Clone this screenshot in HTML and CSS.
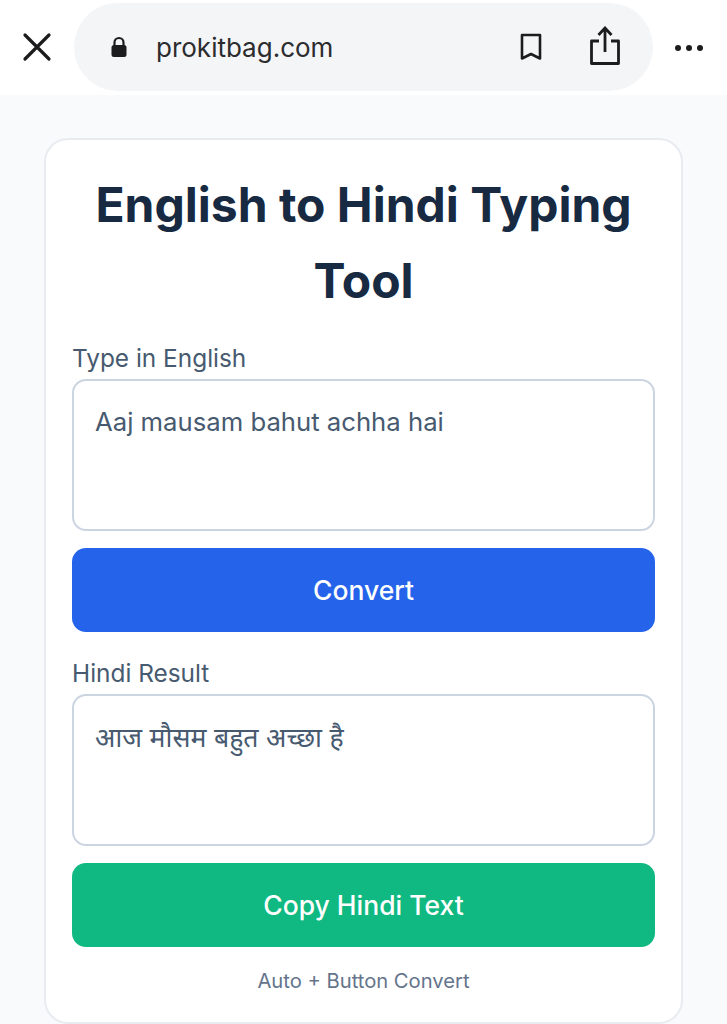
FILE: index.html
```html
<!DOCTYPE html>
<html lang="en">
<head>
  <meta charset="UTF-8" />
  <title>English to Hindi Typing Tool</title>
  <meta name="viewport" content="width=device-width, initial-scale=1.0" />
  <link rel="stylesheet" href="styles.css">
</head>
<body>
  <header class="browser-bar">
    <svg class="close-icon" width="30" height="30" viewBox="0 0 30 30" aria-hidden="true">
      <path d="M3 3 L27 27 M27 3 L3 27" fill="none" stroke="#1c1c1e" stroke-width="3.2" stroke-linecap="round" />
    </svg>
    <div class="address-pill">
      <svg class="lock-icon" width="18" height="22" viewBox="0 0 18 22" aria-hidden="true">
        <path d="M4.5 10 V6.5 a4.5 4.5 0 0 1 9 0 V10" fill="none" stroke="#1c1c1e" stroke-width="2.2" />
        <rect x="1.5" y="9" width="15" height="12" rx="2.5" fill="#1c1c1e" />
      </svg>
      <span class="url">prokitbag.com</span>
      <svg class="bookmark-icon" width="22" height="28" viewBox="0 0 22 28" aria-hidden="true">
        <path d="M2 2 H20 V25.5 L11 21 L2 25.5 Z" fill="none" stroke="#1c1c1e" stroke-width="2.6" stroke-linejoin="round" />
      </svg>
      <svg class="share-icon" width="32" height="40" viewBox="0 0 32 40" aria-hidden="true">
        <path d="M10 15 H2.5 V37.5 H29.5 V15 H22" fill="none" stroke="#1c1c1e" stroke-width="2.8" stroke-linejoin="round" />
        <path d="M16 26 V3 M9.5 9 L16 2 L22.5 9" fill="none" stroke="#1c1c1e" stroke-width="2.8" />
      </svg>
    </div>
    <div class="more-dots"><span></span><span></span><span></span></div>
  </header>

  <main class="page">
    <div class="card">
      <h1>English to Hindi Typing Tool</h1>

      <label for="englishText">Type in English</label>
      <textarea id="englishText">Aaj mausam bahut achha hai</textarea>
      <button class="btn-convert">Convert</button>

      <label for="hindiText">Hindi Result</label>
      <textarea id="hindiText" lang="hi">आज मौसम बहुत अच्छा है</textarea>
      <button class="btn-copy">Copy Hindi Text</button>

      <p class="note">Auto + Button Convert</p>
    </div>
  </main>
</body>
</html>
```

FILE: styles.css
```css
* {
  box-sizing: border-box;
}

body {
  margin: 0;
  height: 1024px;
  overflow: hidden;
  font-family: Inter, "Noto Sans", sans-serif;
  background: #f9fafc;
  color: #1e293b;
}

.browser-bar {
  height: 95px;
  background: #fff;
  display: flex;
  align-items: flex-start;
  padding: 3px 0 0 22px;
}

.close-icon {
  margin-top: 29px;
  flex-shrink: 0;
}

.address-pill {
  width: 579px;
  height: 88px;
  margin-left: 22px;
  background: #f4f5f7;
  border-radius: 44px;
  display: flex;
  align-items: center;
  padding-left: 36px;
}

.lock-icon {
  flex-shrink: 0;
}

.url {
  margin-left: 28px;
  font-size: 26px;
  color: #2c2c2e;
  width: 353px;
}

.bookmark-icon {
  margin-left: 11px;
}

.share-icon {
  margin-left: 47px;
  margin-top: -2px;
}

.more-dots {
  display: flex;
  gap: 5px;
  margin: 42px 0 0 22px;
}

.more-dots span {
  width: 6px;
  height: 6px;
  border-radius: 50%;
  background: #1c1c1e;
}

.page {
  padding: 43px 44px 0;
}

.card {
  height: 886px;
  background: #fff;
  border: 2px solid #e8ebf0;
  border-radius: 24px;
  padding: 27px 26px 0;
}

h1 {
  margin: 0 0 21px;
  font-size: 48px;
  line-height: 76px;
  font-weight: 700;
  text-align: center;
  color: #172a41;
}

label {
  display: block;
  font-size: 24.4px;
  line-height: 36px;
  color: #475a70;
  margin-bottom: 3px;
}

textarea {
  display: block;
  width: 100%;
  height: 152px;
  padding: 22px 21px;
  border: 2px solid #cbd5e1;
  border-radius: 14px;
  font-family: Inter, "Noto Sans", sans-serif;
  font-size: 25.7px;
  line-height: 38px;
  color: #475a70;
  resize: none;
  background: #fff;
}

#hindiText {
  font-size: 26.7px;
}

button {
  display: block;
  width: 100%;
  height: 84px;
  margin-top: 17px;
  border: none;
  border-radius: 14px;
  font-family: Inter, "Noto Sans", sans-serif;
  font-size: 26.5px;
  font-weight: 550;
  color: #fff;
}

.btn-convert {
  background: #2563eb;
  margin-bottom: 23px;
}

.btn-copy {
  background: #10b981;
}

.note {
  margin: 21px 0 0;
  font-size: 20.2px;
  line-height: 26px;
  text-align: center;
  color: #64748b;
}
```
